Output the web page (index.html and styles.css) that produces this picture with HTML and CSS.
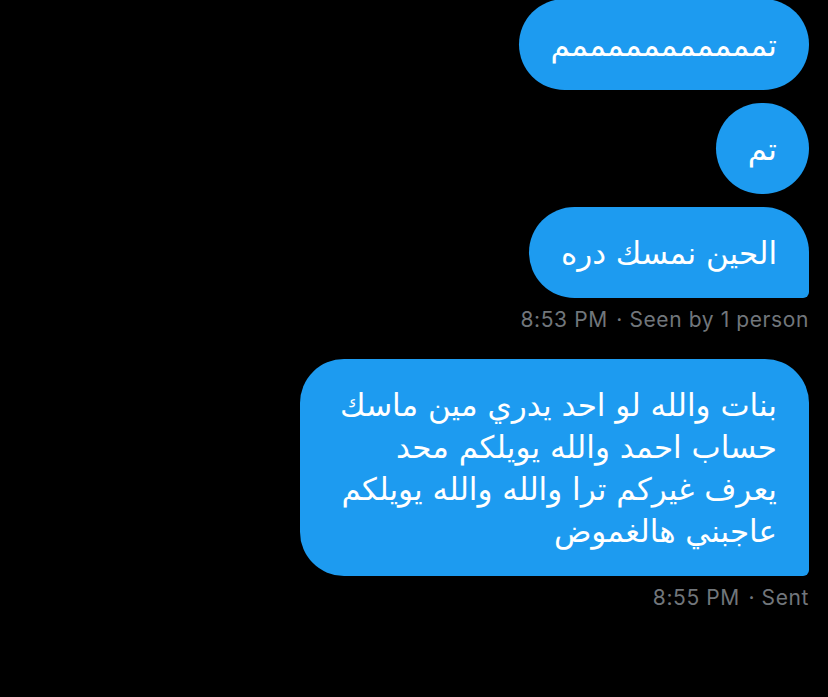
FILE: index.html
```html
<!DOCTYPE html>
<html lang="ar">

<head>
    <meta charset="UTF-8">
    <meta name="viewport" content="width=device-width, initial-scale=1.0">
    <title>Messages</title>
    <link rel="stylesheet" href="styles.css">
</head>

<body>
    <div class="thread">
        <div class="bubble" dir="rtl">تمممممممممممم</div>
        <div class="bubble" dir="rtl">تم</div>
        <div class="bubble last" dir="rtl">الحين نمسك دره</div>
        <div class="meta">8:53 PM <span class="dot">·</span> Seen by 1 person</div>

        <div class="bubble last long" dir="rtl">
            بنات والله لو احد يدري مين ماسك<br>
            حساب احمد والله يويلكم محد<br>
            يعرف غيركم ترا والله والله يويلكم<br>
            عاجبني هالغموض
        </div>
        <div class="meta">8:55 PM <span class="dot">·</span> Sent</div>
    </div>
</body>

</html>
```

FILE: styles.css
```css
body {
    margin: 0;
    padding: 0;
    background-color: #000;
    font-family: "DejaVu Sans", sans-serif;
}

.thread {
    display: flex;
    flex-direction: column;
    align-items: flex-end;
    gap: 13px;
    padding: 0 19px 0 0;
    margin-top: -1px;
}

.bubble {
    background-color: #1d9bf0;
    color: #fff;
    font-size: 31px;
    line-height: 42px;
    padding: 25px 32px 24px;
    border-radius: 46px;
}

.bubble.last {
    border-bottom-right-radius: 6px;
}

.bubble.long {
    border-radius: 44px;
    border-bottom-right-radius: 6px;
    padding-left: 40px;
}

.meta {
    font-family: Inter, "Liberation Sans", sans-serif;
    font-size: 21px;
    letter-spacing: 0.6px;
    line-height: 24px;
    color: #71767b;
    margin-top: -3px;
    margin-bottom: 14px;
}

.dot {
    margin-left: 2px;
}
```
